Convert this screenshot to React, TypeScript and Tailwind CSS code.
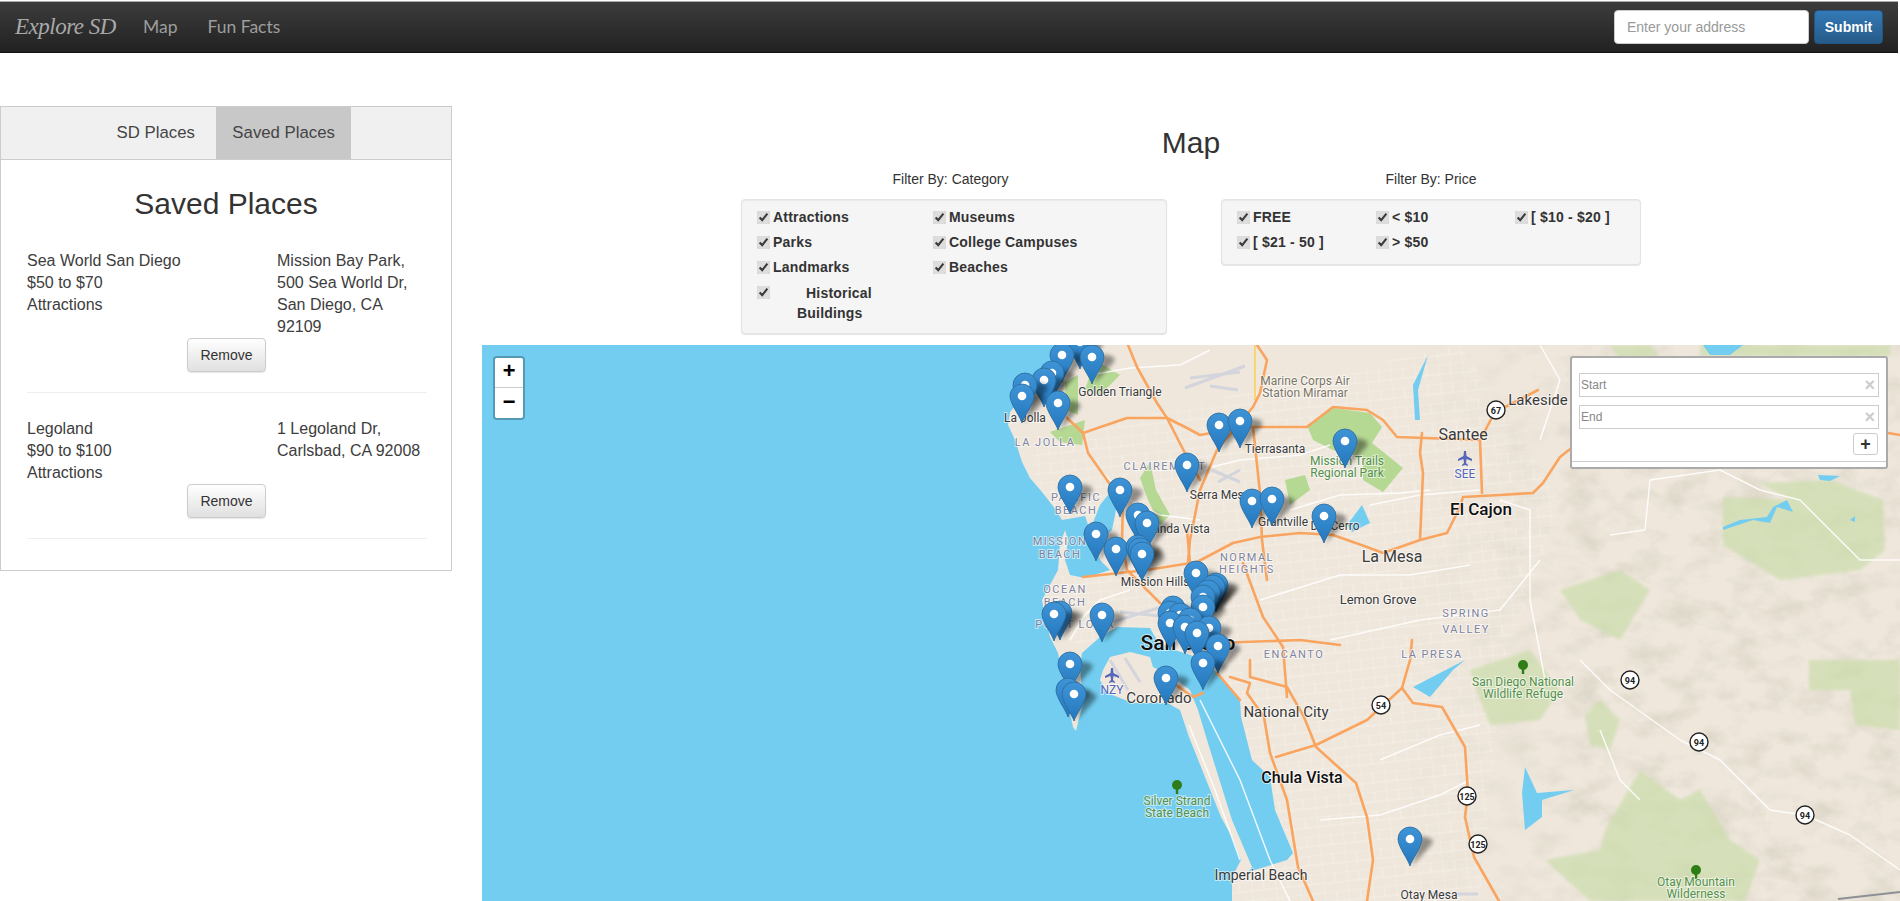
const sans = "font-['Liberation_Sans',Arial,sans-serif]";

const categories = [
  { label: "Attractions" },
  { label: "Museums" },
  { label: "Parks" },
  { label: "College Campuses" },
  { label: "Landmarks" },
  { label: "Beaches" },
];

const prices = ["FREE", "< $10", "[ $10 - $20 ]", "[ $21 - 50 ]", "> $50"];

const saved = [
  {
    name: "Sea World San Diego",
    price: "$50 to $70",
    type: "Attractions",
    address: "Mission Bay Park, 500 Sea World Dr, San Diego, CA 92109",
  },
  {
    name: "Legoland",
    price: "$90 to $100",
    type: "Attractions",
    address: "1 Legoland Dr, Carlsbad, CA 92008",
  },
];

// white dot of every marker, in page pixels, back to front
const pins: [number, number][] = [
  [1080, 342], [1062, 355], [1092, 357], [1052, 373], [1044, 380], [1025, 385], [1022, 396], [1058, 403],
  [1219, 425], [1240, 421], [1345, 441], [1187, 465], [1070, 487], [1120, 490], [1138, 515], [1147, 523],
  [1096, 534], [1116, 549], [1138, 547], [1140, 550], [1142, 554], [1252, 501], [1272, 499], [1324, 516],
  [1196, 573], [1216, 585], [1213, 587], [1208, 592], [1203, 597], [1203, 607], [1173, 608], [1170, 613],
  [1180, 615], [1190, 620], [1170, 623], [1185, 627], [1209, 628], [1197, 633], [1218, 646], [1203, 663],
  [1166, 678], [1102, 615], [1060, 613], [1054, 614], [1070, 664], [1068, 690], [1074, 694], [1410, 839],
];

const orangeRoads = [
  "M1128 345L1137 367L1157 403L1167 418L1187 457L1200 480",
  "M1083 433L1127 418L1167 418L1187 428L1200 435L1217 432L1253 427L1307 427L1333 407L1367 410L1383 420L1397 437L1480 440",
  "M1067 418L1083 433L1088 453L1107 480L1123 503L1122 540L1127 570L1160 603L1178 618",
  "M1257 345L1267 360L1260 393L1253 407L1217 450L1200 490L1190 540L1188 562",
  "M1253 427L1260 493L1262 540L1267 580",
  "M1083 577L1147 570L1197 562L1233 543L1260 537L1300 533L1333 535L1367 547L1383 553L1420 540L1447 533L1460 507L1463 497L1500 495L1533 493L1543 483L1560 457L1574 446",
  "M1888 433L1900 435",
  "M1422 433L1420 453L1423 473L1420 540",
  "M1480 440L1482 493",
  "M1480 440L1495 412L1513 403L1538 390",
  "M1230 677L1250 683L1247 693L1264 717L1270 753L1287 800L1298 867L1313 901",
  "M1250 660L1250 677L1287 687L1304 717L1316 747L1356 783L1367 817L1373 860L1367 901",
  "M1276 757L1316 745L1367 720L1402 688L1410 660L1412 640",
  "M1402 688L1413 703L1442 707L1465 747L1468 793L1465 817L1474 857L1499 901",
  "M1243 563L1263 617L1283 647L1287 697",
  "M1187 530L1190 563",
  "M1217 643L1300 640L1340 645",
  "M1203 693L1193 697L1173 683",
  "M1217 673L1240 700",
];

const whiteRoads = [
  "M1090 375L1130 368L1180 365L1210 350",
  "M1100 470L1130 500L1160 515L1200 520",
  "M1200 470L1240 460L1300 455L1330 445",
  "M1370 505L1420 495L1480 490",
  "M1290 510L1340 495L1400 493L1430 490",
  "M1260 600L1340 575L1410 575L1470 565",
  "M1080 620L1100 600L1130 590",
  "M1070 640L1085 615",
  "M1330 640L1420 620L1500 610L1540 560",
  "M1380 760L1440 735L1480 725",
  "M1320 820L1380 815L1440 795L1470 780",
  "M1580 660L1610 690L1680 740L1720 760L1770 810L1805 815L1850 835L1900 870",
  "M1600 730L1620 780L1640 800",
  "M1500 500L1530 510L1530 600L1545 680",
  "M1540 345L1560 380L1540 440",
  "M1650 480L1645 530L1610 535",
  "M1650 480L1720 470L1760 490L1800 500L1860 560L1900 560",
  "M1200 700L1240 780L1270 860L1290 901",
  "M1189 725L1215 790L1240 860",
];

const greens = [
  "M1307 425L1333 408L1370 413L1382 427L1372 443L1403 468L1383 492L1363 480L1363 457L1333 450L1313 440Z",
  "M1065 382L1078 375L1078 415L1066 410Z",
  "M1050 432L1085 420L1082 445L1060 442Z",
  "M1140 478L1150 462L1156 490L1170 515L1160 525L1148 500Z",
  "M1285 480L1305 475L1310 490L1290 505Z",
  "M1095 360L1120 375L1100 395L1085 390Z",
];

const paleGreens = [
  "M1470 670L1530 650L1560 690L1540 720L1490 725L1480 700Z",
  "M1605 830L1640 770L1680 800L1700 790L1730 840L1760 860L1745 901L1590 901L1545 860L1600 850Z",
  "M1809 660L1900 660L1900 730L1855 725L1850 690L1809 690Z",
  "M1760 483L1830 480L1883 500L1885 550L1860 570L1780 580L1723 545L1723 497L1790 500Z",
  "M1560 590L1620 570L1650 590L1620 640L1580 620Z",
  "M1610 345L1650 345L1660 355L1620 360Z",
  "M1700 345L1890 345L1890 356L1700 356Z",
  "M1585 715L1600 700L1620 720L1610 750L1590 745Z",
];

const lakes = [
  "M1723 530L1753 520L1770 523L1777 507L1793 512L1787 500L1773 507L1767 517L1740 520L1723 527Z",
  "M1525 767L1537 793L1574 790L1542 800L1542 817L1525 830L1522 793Z",
  "M1413 687L1465 660L1453 670L1430 697Z",
  "M1703 345L1743 345L1730 355L1710 355Z",
  "M1347 525L1362 505L1370 523L1352 532Z",
  "M1413 385L1428 355L1418 390L1420 420L1415 420Z",
  "M1818 475L1840 476L1830 481L1820 480Z",
  "M1850 520L1855 516L1855 522Z",
];

type Label = [string, number, number, number, string, number?, number?];

const cityInk = "#3a3a3a";
const hoodInk = "#8083a0";
const parkInk = "#54904a";
const airInk = "#5666b8";

const labels: Label[] = [
  ["Golden Triangle", 1120, 396, 12, cityInk],
  ["La Jolla", 1025, 422, 12, cityInk],
  ["LA JOLLA", 1045, 446, 11, hoodInk, 1.5],
  ["CLAIREMONT", 1165, 470, 11, hoodInk, 1.5],
  ["Serra Mesa", 1220, 499, 12, cityInk],
  ["Tierrasanta", 1275, 453, 12, cityInk],
  ["Marine Corps Air", 1305, 385, 12, "#7c7667"],
  ["Station Miramar", 1305, 397, 12, "#7c7667"],
  ["Mission Trails", 1347, 465, 12, parkInk],
  ["Regional Park", 1347, 477, 12, parkInk],
  ["Santee", 1463, 440, 16, cityInk],
  ["SEE", 1465, 478, 12, airInk],
  ["El Cajon", 1481, 515, 17, "#111", 0, 500],
  ["La Mesa", 1392, 562, 16, cityInk],
  ["Lemon Grove", 1378, 604, 13, cityInk],
  ["Del Cerro", 1335, 530, 12, cityInk],
  ["Grantville", 1283, 526, 12, cityInk],
  ["Linda Vista", 1180, 533, 12, cityInk],
  ["PACIFIC", 1076, 501, 11, hoodInk, 1.5],
  ["BEACH", 1076, 514, 11, hoodInk, 1.5],
  ["MISSION", 1060, 545, 11, hoodInk, 1.5],
  ["BEACH", 1060, 558, 11, hoodInk, 1.5],
  ["NORMAL", 1247, 561, 11, hoodInk, 1.5],
  ["HEIGHTS", 1247, 573, 11, hoodInk, 1.5],
  ["Mission Hills", 1155, 586, 12, cityInk],
  ["OCEAN", 1065, 593, 11, hoodInk, 1.5],
  ["BEACH", 1065, 606, 11, hoodInk, 1.5],
  ["POINT LOMA", 1075, 628, 11, hoodInk, 1.5],
  ["San Diego", 1188, 650, 21, "#111", 0, 500],
  ["NZY", 1112, 694, 12, airInk],
  ["Coronado", 1159, 703, 15, cityInk],
  ["National City", 1286, 717, 15, cityInk],
  ["ENCANTO", 1294, 658, 11, hoodInk, 1.5],
  ["LA PRESA", 1432, 658, 11, hoodInk, 1.5],
  ["SPRING", 1466, 617, 11, hoodInk, 1.5],
  ["VALLEY", 1466, 633, 11, hoodInk, 1.5],
  ["Lakeside", 1538, 405, 15, cityInk],
  ["San Diego National", 1523, 686, 12, parkInk],
  ["Wildlife Refuge", 1523, 698, 12, parkInk],
  ["Chula Vista", 1302, 783, 16, "#111", 0, 500],
  ["Silver Strand", 1177, 805, 12, parkInk],
  ["State Beach", 1177, 817, 12, parkInk],
  ["Imperial Beach", 1261, 880, 14, cityInk],
  ["Otay Mesa", 1429, 899, 12, cityInk],
  ["Otay Mountain", 1696, 886, 12, parkInk],
  ["Wilderness", 1696, 898, 12, parkInk],
];

const shields: [string, number, number][] = [
  ["94", 1630, 680],
  ["94", 1699, 742],
  ["94", 1805, 815],
  ["54", 1381, 705],
  ["125", 1467, 796],
  ["125", 1478, 844],
  ["67", 1496, 410],
];

const trees: [number, number][] = [
  [1523, 667],
  [1177, 787],
  [1696, 872],
];

const planes: [number, number][] = [
  [1465, 458],
  [1112, 675],
];

function MapArt() {
  return (
    <svg viewBox="482 345 1418 556" className="block w-full h-full">
      <defs>
        <linearGradient id="pinFill" x1="0" y1="0" x2="0" y2="1">
          <stop offset="0" stopColor="#3f94d6" />
          <stop offset="1" stopColor="#2477bd" />
        </linearGradient>
        <filter id="terrain" x="0" y="0" width="1" height="1">
          <feTurbulence type="fractalNoise" baseFrequency="0.03 0.045" numOctaves="5" seed="7" />
          <feColorMatrix values="0 0 0 0 .72  0 0 0 0 .68  0 0 0 0 .58  2.4 0 0 0 -1.05" />
        </filter>
        <filter id="soft" x="-60%" y="-60%" width="220%" height="220%">
          <feGaussianBlur stdDeviation="2.2" />
        </filter>
        <filter id="edge" x="-5%" y="-5%" width="110%" height="110%">
          <feGaussianBlur stdDeviation="1.5" />
        </filter>
        <linearGradient id="fadeEast" x1="0" y1="0" x2="1" y2="0">
          <stop offset="0" stopColor="#000" />
          <stop offset="0.4" stopColor="#fff" />
        </linearGradient>
        <mask id="eastMask">
          <rect x="1400" y="345" width="500" height="556" fill="url(#fadeEast)" />
        </mask>
        <pattern id="streets" width="24" height="19" patternUnits="userSpaceOnUse" patternTransform="rotate(-6)">
          <path d="M0 0H24M0 0V19M12 0V10M0 10H24" stroke="#fff" strokeWidth="0.7" fill="none" opacity="0.45" />
        </pattern>
        <g id="pin">
          <path d="M2 27L21 6Q25 1 19 -1L11 -3Z" fill="#000" opacity="0.4" filter="url(#soft)" />
          <path
            d="M0 27C-2 20 -12 8 -12 0A12 12 0 1 1 12 0C12 8 2 20 0 27Z"
            fill="url(#pinFill)"
            stroke="#2a6a9c"
            strokeWidth="0.8"
          />
          <circle r="4.3" fill="#fff" />
        </g>
      </defs>

      <rect x="482" y="345" width="1418" height="556" fill="#efe7dc" />
      <rect x="1400" y="345" width="500" height="556" filter="url(#terrain)" mask="url(#eastMask)" />
      <path d="M1030 440L1460 345L1560 500L1500 680L1480 901L1230 901L1050 600Z" fill="url(#streets)" />

      {paleGreens.map((d) => (
        <path key={d} d={d} fill="#cbddab" opacity="0.7" filter="url(#edge)" />
      ))}
      {greens.map((d) => (
        <path key={d} d={d} fill="#b5d893" />
      ))}

      {/* ocean and both bays */}
      <path
        d="M482 345H1058L1056 375L1045 392L1022 398L1010 412L1008 425L1015 440L1022 462L1030 478L1042 492L1056 510L1066 527L1060 545L1058 570L1050 585L1042 600L1046 622L1050 637L1058 653L1063 680L1073 727L1076 731L1083 703L1080 667L1082 653L1100 637L1117 627L1150 628L1158 642L1175 650L1205 660L1217 673L1240 700L1241 717L1252 760L1270 777L1275 810L1293 853L1287 860L1232 877V901H482Z"
        fill="#72cdf0"
      />
      <path
        d="M1062 520L1085 516L1090 530L1100 505L1108 495L1118 500L1112 530L1095 545L1100 560L1110 570L1085 578L1070 575L1065 560L1068 540Z"
        fill="#72cdf0"
      />
      <path
        d="M1103 670L1110 657L1130 652L1150 657L1153 667L1173 677L1190 690L1198 710L1207 740L1232 820L1252 867L1245 877L1232 877L1241 860L1232 837L1221 817L1189 737L1180 710L1167 703L1133 703L1107 693L1100 680Z"
        fill="#efe7dc"
      />
      {lakes.map((d) => (
        <path key={d} d={d} fill="#72cdf0" />
      ))}

      {/* airfields */}
      <g stroke="#d3d4dc" strokeWidth="3" fill="none">
        <path d="M1185 388L1245 366M1190 378L1240 372M1210 386L1238 390" />
        <path d="M1112 622L1165 606M1120 612L1160 616" />
        <path d="M1212 470L1240 482M1218 482L1240 470" />
        <path d="M1110 660L1128 690M1125 658L1140 682" />
        <path d="M1431 894H1478" />
      </g>

      <g stroke="#fff" strokeWidth="1.5" strokeOpacity="0.85" fill="none" strokeLinejoin="round">
        {whiteRoads.map((d) => (
          <path key={d} d={d} />
        ))}
      </g>
      <path d="M1255 345V400" stroke="#f7d774" strokeWidth="2" fill="none" />
      <g stroke="#f9a45f" strokeWidth="2.6" fill="none" strokeLinejoin="round" strokeLinecap="round">
        {orangeRoads.map((d) => (
          <path key={d} d={d} />
        ))}
      </g>
      <path d="M1838 899L1900 892" stroke="#8d9096" strokeWidth="2" />

      {planes.map(([x, y]) => (
        <path
          key={x}
          transform={`translate(${x} ${y})`}
          d="M-1 -7H1L1.5 -2L7 1V3L1.5 1L1 5L3 7V8L0 7L-3 8V7L-1 5L-1.5 1L-7 3V1L-1.5 -2Z"
          fill={airInk}
        />
      ))}
      {trees.map(([x, y]) => (
        <g key={x} transform={`translate(${x} ${y})`} fill="#2f7d17">
          <circle cy="-2" r="5" />
          <rect x="-1.2" y="0" width="2.4" height="7" />
        </g>
      ))}

      <g style={{ fontFamily: "Roboto, sans-serif" }} textAnchor="middle">
        {labels.map(([text, x, y, size, ink, spacing, weight]) => (
          <text
            key={text + x + y}
            x={x}
            y={y}
            fontSize={size}
            fontWeight={weight ?? 400}
            fill={ink}
            letterSpacing={spacing ?? 0}
            stroke="#fff"
            strokeOpacity="0.6"
            strokeWidth="2"
            paintOrder="stroke"
          >
            {text}
          </text>
        ))}
        {shields.map(([text, x, y]) => (
          <g key={text + x}>
            <circle cx={x} cy={y} r="9" fill="#fff" stroke="#222" strokeWidth="1.4" />
            <text x={x} y={y + 3.5} fontSize="9" fontWeight="700" fill="#222">
              {text}
            </text>
          </g>
        ))}
      </g>

      {pins.map(([x, y]) => (
        <use key={`${x}-${y}`} href="#pin" x={x} y={y} />
      ))}
    </svg>
  );
}

function Check({ label, className = "" }: { label: React.ReactNode; className?: string }) {
  return (
    <label className={`flex items-center gap-[3px] h-[25px] font-bold text-[14px] tracking-[0.2px] text-[#333] ${className}`}>
      <input type="checkbox" defaultChecked className="w-[13px] h-[13px] m-0 accent-[#dddddd]" />
      <span>{label}</span>
    </label>
  );
}

function RouteInput({ placeholder }: { placeholder: string }) {
  return (
    <div className="flex items-center justify-between h-[24px] border border-[#ccc] pl-px pr-[3px] text-[12px] text-[#888]">
      <span>{placeholder}</span>
      <span className="font-bold text-[18px] leading-none text-[#ccc]">×</span>
    </div>
  );
}

function SavedRow({ place }: { place: (typeof saved)[number] }) {
  return (
    <div className="grid grid-cols-[239px_149px] gap-x-[11px] border-b border-[#eee] pb-[20px] mb-[25px] w-[400px]">
      <div>
        <div>{place.name}</div>
        <div>{place.price}</div>
        <div>{place.type}</div>
      </div>
      <div>{place.address}</div>
      <button className="col-start-1 justify-self-end w-[79px] h-[34px] rounded-[4px] border border-[#ccc] bg-gradient-to-b from-white to-[#e0e0e0] text-[14px] text-[#333] shadow-[0_1px_1px_rgba(0,0,0,0.1)]">
        Remove
      </button>
    </div>
  );
}

export default function App() {
  return (
    <div className={`w-[1900px] h-[901px] overflow-hidden bg-white text-[#333] ${sans}`}>
      <div className="pt-px pr-[2px]">
        <nav className="flex items-center h-[52px] border-t border-[#aaa] border-b border-b-[#111] bg-gradient-to-b from-[#3c3c3c] to-[#222]">
          <span className="ml-[15px] w-[114px] whitespace-nowrap font-['Liberation_Serif',serif] italic text-[23px] tracking-[-0.5px] text-[#a8a8a8]">
            Explore SD
          </span>
          <a className="ml-[14px] font-['Lato',sans-serif] text-[17.5px] text-[#9d9d9d]">Map</a>
          <a className="ml-[30px] font-['Lato',sans-serif] text-[17.5px] text-[#9d9d9d]">Fun Facts</a>
          <div className="flex gap-[5px] ml-auto mr-[15px]">
            <div className="flex items-center w-[195px] h-[34px] rounded-[4px] bg-white border border-[#ccc] pl-[12px] text-[14px] text-[#999]">
              Enter your address
            </div>
            <button className="w-[69px] h-[34px] rounded-[4px] border border-[#245580] bg-gradient-to-b from-[#337ab7] to-[#265a88] text-[14px] font-bold text-white">
              Submit
            </button>
          </div>
        </nav>
      </div>

      <main className="flex">
        <aside className="w-[452px] shrink-0 mt-[53px]">
          <div className="h-[465px] border border-[#ccc]">
            <div className="flex justify-center h-[53px] bg-[#f0f0f0] border-b border-[#ccc] text-[16.8px]">
              <div className="flex items-center pl-[16px] pr-[21px] text-[#444]">SD Places</div>
              <div className="flex items-center px-[16.5px] bg-[#c8c8c8] text-[#444]">Saved Places</div>
            </div>
            <h2 className="text-[30px] leading-[33px] text-center mt-[27px] mb-[30px]">Saved Places</h2>
            <div className="pl-[26px] text-[16px] leading-[22px] text-[#3d3d3d]">
              {saved.map((place) => (
                <SavedRow key={place.name} place={place} />
              ))}
            </div>
          </div>
        </aside>

        <section className="ml-[30px] flex-1 min-w-0">
          <h1 className="mt-[73px] text-[30px] leading-[33px] text-center">Map</h1>
          <div className="flex mt-[10px] ml-[259px] text-[14px]">
            <div className="w-[426px]">
              <div className="h-[20px] leading-[20px] text-center pr-[7px]">Filter By: Category</div>
              <div className="mt-[10px] h-[135px] rounded-[4px] border border-[#e3e3e3] bg-[#f5f5f5] shadow-[inset_0_1px_1px_rgba(0,0,0,0.05),0_1px_1px_rgba(0,0,0,0.1)] pl-[15px] pt-[5px]">
                <div className="grid grid-cols-[176px_1fr]">
                  {categories.map((c) => (
                    <Check key={c.label} label={c.label} />
                  ))}
                </div>
                <label className="flex items-start pt-[3px] font-bold text-[14px] leading-[20px] tracking-[0.2px]">
                  <input type="checkbox" defaultChecked className="w-[13px] h-[13px] mt-[3px] accent-[#dddddd]" />
                  <span className="ml-[27px] indent-[9px] w-[80px]">Historical Buildings</span>
                </label>
              </div>
            </div>
            <div className="w-[420px] ml-[54px]">
              <div className="h-[20px] leading-[20px] text-center">Filter By: Price</div>
              <div className="mt-[10px] h-[66px] rounded-[4px] border border-[#e3e3e3] bg-[#f5f5f5] shadow-[inset_0_1px_1px_rgba(0,0,0,0.05),0_1px_1px_rgba(0,0,0,0.1)] pl-[15px] pt-[5px]">
                <div className="grid grid-cols-[139px_139px_1fr]">
                  {prices.map((p) => (
                    <Check key={p} label={p} />
                  ))}
                </div>
              </div>
            </div>
          </div>

          <div className="relative mt-[11px] h-[556px] overflow-hidden">
            <MapArt />

            <div className="absolute left-[11px] top-[11px] w-[32px] rounded-[4px] border-2 border-[rgba(0,0,0,0.25)] bg-clip-padding font-['Liberation_Mono',monospace] font-bold text-[22px] text-black">
              <div className="flex items-center justify-center h-[30px] bg-white rounded-t-[2px] border-b border-[#ccc]">+</div>
              <div className="flex items-center justify-center h-[30px] bg-white rounded-b-[2px]">−</div>
            </div>

            <div className="absolute left-[1088px] top-[11px] w-[318px] h-[113px] rounded-[3px] border-2 border-[#aaa] bg-white pt-[15px] px-[7px]">
              <div className="flex flex-col gap-[8px]">
                <RouteInput placeholder="Start" />
                <RouteInput placeholder="End" />
              </div>
              <div className="flex justify-end mt-[4px] pr-px">
                <div className="flex items-center justify-center w-[25px] h-[22px] rounded-[3px] border border-[#ccc] font-bold text-[18px] text-[#333]">
                  +
                </div>
              </div>
              <div className="-mx-[7px] mt-[6px] border-t border-[#ccc]" />
            </div>
          </div>
        </section>
      </main>
    </div>
  );
}
